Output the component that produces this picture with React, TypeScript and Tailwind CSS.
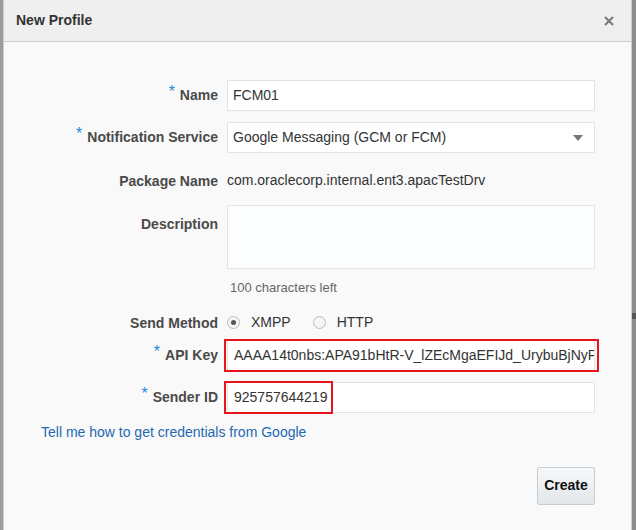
const font = "font-['Liberation_Sans',Arial,sans-serif]";

function Label({ text, required }: { text: string; required?: boolean }) {
  return (
    <div className="flex w-[214px] shrink-0 justify-end pt-[3px] text-[14px] font-bold text-[#4a4a4a]">
      {required && <span className="relative -top-[5px] mr-[5px] text-[16px] font-normal text-[#1f8ad6]">*</span>}
      <span>{text}</span>
    </div>
  );
}

function TextBox({ value, className = "" }: { value: string; className?: string }) {
  return (
    <div
      className={`flex h-[31px] w-[368px] items-center overflow-hidden whitespace-nowrap border border-[#dfe4e7] bg-white pl-[5px] text-[14px] text-[#333] ${className}`}
    >
      {value}
    </div>
  );
}

function Radio({ label, checked }: { label: string; checked?: boolean }) {
  return (
    <label className="flex items-center gap-[11px]">
      <span className="flex h-[13px] w-[13px] items-center justify-center rounded-full border border-[#b9bec3] bg-[#f3f4f5]">
        {checked && <span className="h-[5px] w-[5px] rounded-full bg-[#555]" />}
      </span>
      <span className="text-[14px] text-[#333]">{label}</span>
    </label>
  );
}

export default function App() {
  return (
    <div className={`flex h-[530px] w-[636px] bg-[#8e8e8e] ${font}`}>
      <div className="w-[3px] bg-[#9c9c9c]" />
      <div className="flex w-[629px] flex-col border-x border-[#c9ced3] bg-[#f9f9f9]">
        <div className="flex h-[42px] items-center justify-between border-b border-[#c4ced7] bg-[#efefef] pl-[12px] pr-[17px]">
          <span className="text-[14px] font-bold text-[#333]">New Profile</span>
          <svg width="10" height="10" viewBox="0 0 10 10">
            <path d="M1 1L9 9M9 1L1 9" stroke="#7b7b7b" strokeWidth="2.2" />
          </svg>
        </div>

        <div className="flex flex-col pt-[38px]">
          <div className="flex items-center gap-[9px]">
            <Label text="Name" required />
            <TextBox value="FCM01" />
          </div>

          <div className="mt-[11px] flex items-center gap-[9px]">
            <Label text="Notification Service" required />
            <div className="flex h-[31px] w-[368px] items-center justify-between border border-[#dfe4e7] bg-white pl-[5px] pr-[11px] text-[14px] text-[#333]">
              <span>Google Messaging (GCM or FCM)</span>
              <svg width="10" height="6" viewBox="0 0 10 6">
                <path d="M0 0H10L5 6Z" fill="#777" />
              </svg>
            </div>
          </div>

          <div className="mt-[15px] flex items-center gap-[9px]">
            <Label text="Package Name" />
            <span className="pt-[1px] text-[14px] text-[#333]">com.oraclecorp.internal.ent3.apacTestDrv</span>
          </div>

          <div className="mt-[13px] flex items-start gap-[9px]">
            <div className="pt-[6px]">
              <Label text="Description" />
            </div>
            <div className="h-[64px] w-[368px] border border-[#dfe4e7] bg-[#fcfdfe]" />
          </div>

          <div className="mt-[9px] pl-[226px] text-[13px] text-[#666]">100 characters left</div>

          <div className="mt-[12px] flex items-center gap-[9px]">
            <Label text="Send Method" />
            <div className="flex items-center gap-[22px] pt-[2px]">
              <Radio label="XMPP" checked />
              <Radio label="HTTP" />
            </div>
          </div>

          <div className="mt-[6px] flex items-center gap-[9px]">
            <Label text="API Key" required />
            <div className="relative">
              <TextBox value="AAAA14t0nbs:APA91bHtR-V_lZEcMgaEFIJd_UrybuBjNyPkXq" className="pl-[6px]" />
              <div className="absolute -left-[3px] -top-[1px] h-[33px] w-[375px] border-2 border-[#e8141c]" />
            </div>
          </div>

          <div className="mt-[11px] flex items-center gap-[9px]">
            <Label text="Sender ID" required />
            <div className="relative">
              <TextBox value="925757644219" className="pl-[6px]" />
              <div className="absolute -left-[3px] -top-[1px] h-[33px] w-[109px] border-2 border-[#e8141c]" />
            </div>
          </div>

          <a className="mt-[9px] pl-[37px] text-[14px] text-[#1d6ab1]">Tell me how to get credentials from Google</a>

          <div className="mt-[24px] flex justify-end pr-[36px]">
            <button className="h-[38px] w-[58px] rounded-[2px] border border-[#c4ced7] bg-gradient-to-b from-[#f6f7f8] to-[#e3e7ea] text-[14px] font-bold text-[#111]">
              Create
            </button>
          </div>
        </div>
      </div>
      <div className="flex flex-1 flex-col">
        <div className="mt-[313px] h-[6px] bg-[#555]" />
      </div>
    </div>
  );
}
